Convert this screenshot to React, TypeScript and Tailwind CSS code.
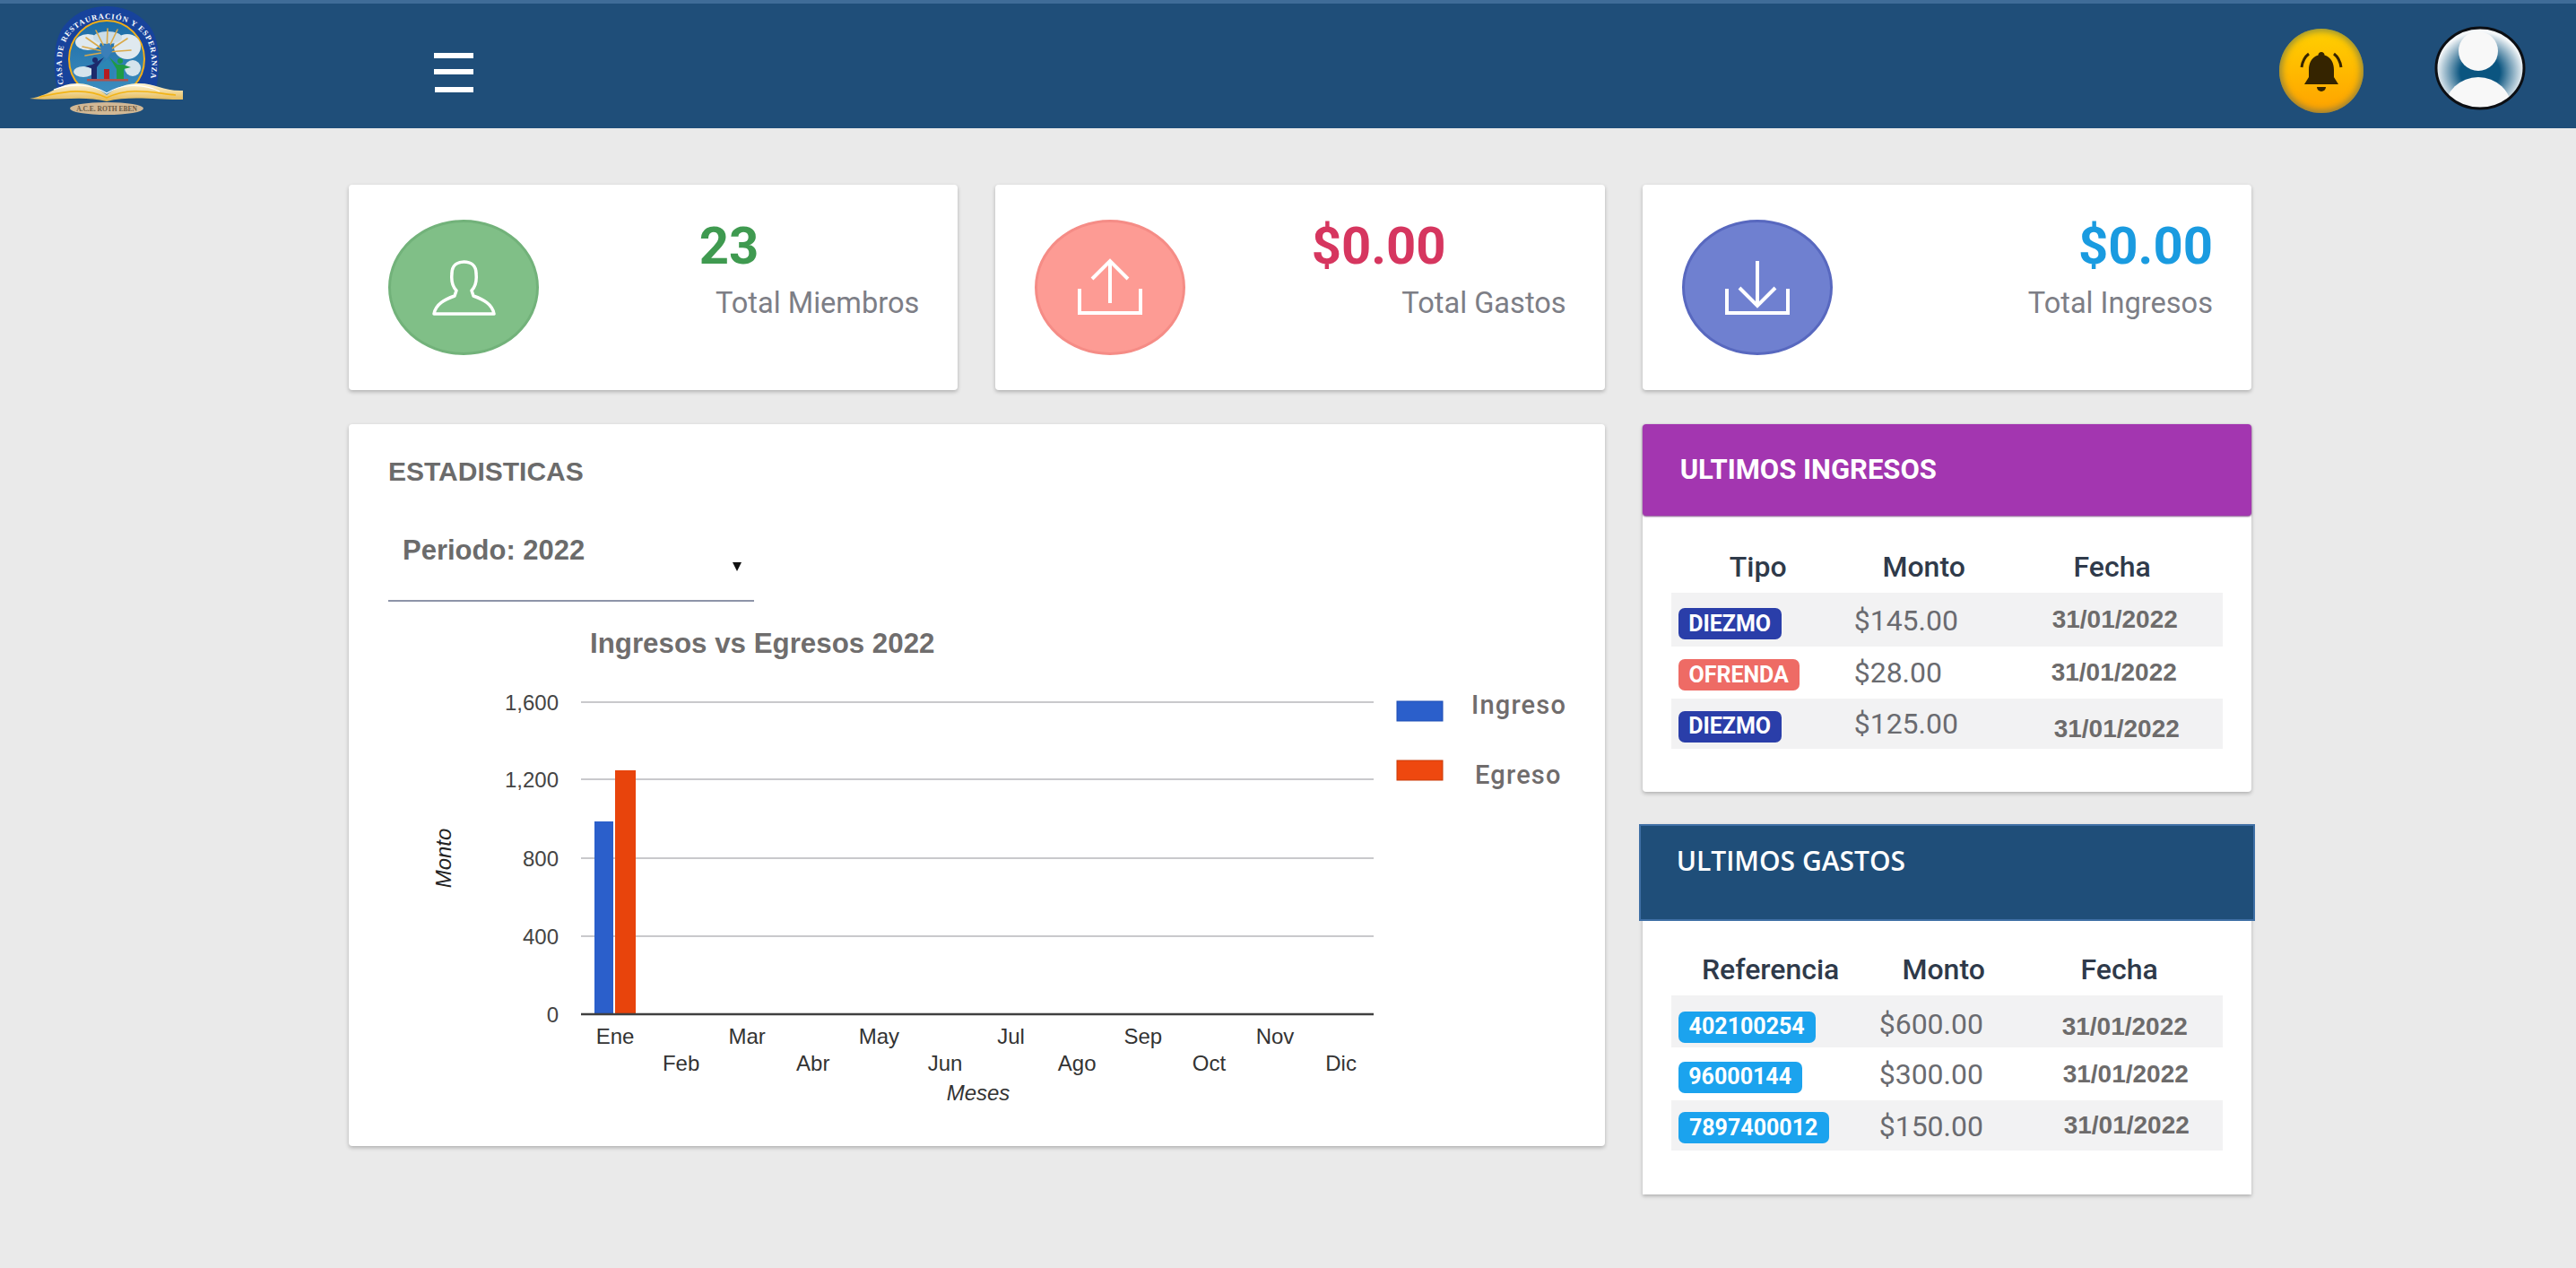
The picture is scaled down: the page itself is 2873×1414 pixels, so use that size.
const roboto = "font-['Roboto',sans-serif]"
const arial = "font-['Liberation_Sans',Arial,sans-serif]"

const ingresos = [
  { badge: 'DIEZMO', badgeClass: 'w-[115px] bg-[#2a3ea9] mt-[9px]', monto: '$145.00', montoClass: 'mt-[2px]', fecha: '31/01/2022', fechaClass: 'ml-[0px]', h: 'h-[60px] bg-[#f2f2f3]' },
  { badge: 'OFRENDA', badgeClass: 'w-[135px] bg-[#ee6b65] mt-[5px]', monto: '$28.00', montoClass: 'mb-[0px]', fecha: '31/01/2022', fechaClass: 'ml-[-1px]', h: 'h-[58px]' },
  { badge: 'DIEZMO', badgeClass: 'w-[115px] bg-[#2a3ea9] mt-[6px]', monto: '$125.00', montoClass: 'mb-[0px]', fecha: '31/01/2022', fechaClass: 'ml-[2px] mt-[12px]', h: 'h-[56px] bg-[#f2f2f3]' },
]

const gastos = [
  { badge: '402100254', badgeClass: 'w-[153px] bg-[#1ba3ee] mt-[12px]', monto: '$600.00', montoClass: 'mt-[6px]', fecha: '31/01/2022', fechaClass: 'mt-[12px]', h: 'h-[58px] bg-[#f2f2f3]' },
  { badge: '96000144', badgeClass: 'w-[138px] bg-[#1ba3ee] mt-[7px]', monto: '$300.00', montoClass: 'mt-[1px]', fecha: '31/01/2022', fechaClass: 'ml-[1px]', h: 'h-[59px]' },
  { badge: '7897400012', badgeClass: 'w-[168px] bg-[#1ba3ee] mt-[5px]', monto: '$150.00', montoClass: 'mt-[2px]', fecha: '31/01/2022', fechaClass: 'ml-[2px]', h: 'h-[56px] bg-[#f2f2f3]' },
]

const meses = ['Ene', 'Feb', 'Mar', 'Abr', 'May', 'Jun', 'Jul', 'Ago', 'Sep', 'Oct', 'Nov', 'Dic']
const ejeY = [
  { label: '1,600', y: 782 },
  { label: '1,200', y: 868 },
  { label: '800', y: 956 },
  { label: '400', y: 1043 },
]

function Logo() {
  return (
    <svg viewBox="33 4 172 135" className="w-[172px] h-[135px] self-start ml-[33px]">
      <defs>
        <linearGradient id="cielo" x1="0" y1="0" x2="0" y2="1">
          <stop offset="0" stopColor="#1c6ba6" />
          <stop offset="1" stopColor="#3f8fc0" />
        </linearGradient>
        <linearGradient id="libro" x1="0" y1="0" x2="0" y2="1">
          <stop offset="0" stopColor="#fff6d8" />
          <stop offset="1" stopColor="#e3b64f" />
        </linearGradient>
        <path id="anillo" d="M71 95 C67 72 68 52 77 40 C87 27 103 21 119 21 C135 21 151 27 161 40 C170 52 171 72 167 95" fill="none" />
      </defs>
      <path d="M64 100 C58 70 60 40 74 26 C86 12 104 7 119 7 C134 7 152 12 164 26 C178 40 180 70 174 100 Z" fill="#17439c" />
      <ellipse cx="119" cy="66" rx="42" ry="43" fill="url(#cielo)" stroke="#f3ae17" strokeWidth="2" />
      <ellipse cx="98" cy="47" rx="14" ry="9" fill="#dfe9ef" />
      <ellipse cx="142" cy="52" rx="15" ry="14" fill="#dfe9ef" />
      <ellipse cx="120" cy="42" rx="16" ry="7" fill="#cbdde8" />
      <ellipse cx="93" cy="80" rx="11" ry="6" fill="#d5e4ec" />
      <ellipse cx="148" cy="76" rx="9" ry="9" fill="#d5e4ec" />
      <g stroke="#d9a94a" strokeWidth="1.6" strokeLinecap="round">
        <path d="M119 58 L107 34" />
        <path d="M119 58 L120 32" />
        <path d="M119 58 L131 33" />
        <path d="M119 58 L142 43" />
        <path d="M119 58 L146 56" />
        <path d="M119 58 L96 42" />
        <path d="M119 58 L92 52" />
        <path d="M119 58 L95 62" />
      </g>
      <path d="M112 52 L122 48 L126 56 L119 66 L113 60 Z" fill="#3b7fb8" />
      <path d="M120 66 L131 76 H127 V88 H110 V76 H107 Z" fill="#2c86b4" />
      <rect x="116" y="77" width="6" height="11" fill="#b51c22" />
      <circle cx="106" cy="67" r="3" fill="#1c2a6b" />
      <path d="M95 74 L103 72 L116 64 L108 75 V88 H102 V76 Z" fill="#1c2a6b" />
      <circle cx="134" cy="68" r="3" fill="#1f9a45" />
      <path d="M122 64 L131 72 H137 L146 75 L138 77 V88 H130 V77 Z" fill="#1f9a45" />
      <rect x="97" y="88" width="46" height="2.5" fill="#b0524e" />
      <text fontSize="8.6" fontWeight="700" fill="#ffffff" fontFamily="'Liberation Serif',serif">
        <textPath href="#anillo" startOffset="1" textLength="200">CASA DE RESTAURACIÓN Y ESPERANZA</textPath>
      </text>
      <ellipse cx="119" cy="121" rx="41" ry="7" fill="#d2b895" />
      <text x="119" y="124" textAnchor="middle" fontSize="7.5" fontWeight="700" fill="#6b5a44" fontFamily="'Liberation Serif',serif">A.C.E. ROTH EBEN</text>
      <path d="M33 110 C58 106 66 92 88 93 C102 94 112 100 119 106 C126 100 136 94 153 93 C172 92 182 102 204 101 V111 C180 112 146 106 119 113 C92 106 60 113 33 110 Z" fill="url(#libro)" />
      <path d="M44 108 C66 104 92 96 119 109 C146 96 172 104 196 106" fill="none" stroke="#f2b417" strokeWidth="1.6" />
      <path d="M60 100 C80 92 104 94 119 104 C134 94 158 92 178 102" fill="none" stroke="#ffffff" strokeWidth="1.2" />
    </svg>
  )
}

function Campana() {
  return (
    <div className="w-[94px] h-[94px] mt-[11px] rounded-full bg-gradient-to-b from-[#ffd000] to-[#ffa200] shadow-[inset_0_0_7px_3px_rgba(70,100,100,0.55)]">
      <svg viewBox="0 0 94 94" className="w-[94px] h-[94px]">
        <path d="M47 26 C49 26 50.5 27.5 50.5 29.5 C58 32 61 38 61 46 V54 L66 62 H28 L33 54 V46 C33 38 36 32 43.5 29.5 C43.5 27.5 45 26 47 26 Z" fill="#352400" />
        <path d="M42 65 H52 A5 5 0 0 1 42 65 Z" fill="#352400" />
        <path d="M25 43 C26 36 29 31 33 28" fill="none" stroke="#352400" strokeWidth="3" />
        <path d="M69 43 C68 36 65 31 61 28" fill="none" stroke="#352400" strokeWidth="3" />
      </svg>
    </div>
  )
}

function Avatar() {
  return (
    <svg viewBox="0 0 102 94" className="w-[102px] h-[94px] ml-[79px] mr-[56px] mt-[5px]">
      <defs>
        <radialGradient id="fondoAvatar" cx="0.5" cy="0.55" r="0.5">
          <stop offset="0.45" stopColor="#0b5580" />
          <stop offset="1" stopColor="#f4f7f9" />
        </radialGradient>
        <clipPath id="recorte">
          <ellipse cx="51" cy="47" rx="49" ry="45" />
        </clipPath>
      </defs>
      <ellipse cx="51" cy="47" rx="49" ry="45" fill="url(#fondoAvatar)" />
      <g clipPath="url(#recorte)">
        <ellipse cx="49" cy="28" rx="22" ry="22" fill="#f8f8f8" />
        <ellipse cx="49" cy="92" rx="37" ry="35" fill="#f8f8f8" />
      </g>
      <ellipse cx="51" cy="47" rx="49" ry="45" fill="none" stroke="#0c0f14" strokeWidth="3" />
    </svg>
  )
}

function IconoMiembro() {
  return (
    <svg viewBox="0 0 71 62" className="w-[71px] h-[62px]" fill="none" stroke="#ffffff" strokeWidth="3.5" strokeLinejoin="round">
      <path d="M2 60 C4 49 14 44 25 40 L27 34 C23 30 21 24 22 15 C22 6 28 2 35.5 2 C43 2 49 6 49 15 C50 24 48 30 44 34 L46 40 C57 44 67 49 69 60 Z" />
    </svg>
  )
}

function IconoSubir() {
  return (
    <svg viewBox="0 0 80 70" className="w-[80px] h-[70px]" fill="none" stroke="#ffffff" strokeWidth="4">
      <path d="M6 36 V63 H74 V36" />
      <path d="M40 5 V52" />
      <path d="M20 25 L40 5 L60 25" />
    </svg>
  )
}

function IconoBajar() {
  return (
    <svg viewBox="0 0 80 70" className="w-[80px] h-[70px]" fill="none" stroke="#ffffff" strokeWidth="4">
      <path d="M6 36 V63 H74 V36" />
      <path d="M40 5 V55" />
      <path d="M20 35 L40 55 L60 35" />
    </svg>
  )
}

function StatCard({ icon, ovalClass, value, valueClass, label }: { icon: React.ReactNode; ovalClass: string; value: string; valueClass: string; label: string }) {
  return (
    <div className="h-[229px] bg-white rounded-[4px] shadow-[0_2px_4px_rgba(0,0,0,0.25)] flex items-center pl-[44px] pr-[43px]">
      <div className={`w-[168px] h-[151px] rounded-[50%] border-[3px] flex items-center justify-center ${ovalClass}`}>{icon}</div>
      <div className={`ml-auto self-start pt-[38px] flex flex-col items-end ${roboto}`}>
        <div className={`h-[60px] leading-[60px] text-[58px] font-bold ${valueClass}`}>{value}</div>
        <div className="mt-[16px] h-[36px] leading-[36px] text-[32.6px] text-[#7d7e86]">{label}</div>
      </div>
    </div>
  )
}

function Grafico() {
  return (
    <svg viewBox="433 690 1340 570" className="w-[1340px] h-[570px] mt-[20px]" fontFamily="'Liberation Sans',Arial,sans-serif">
      <text x="658" y="727" fontSize="31.3" fontWeight="700" fill="#6f6d6d">Ingresos vs Egresos 2022</text>
      {ejeY.map((t) => (
        <g key={t.label}>
          <line x1="648" x2="1532" y1={t.y} y2={t.y} stroke="#c9c9cc" strokeWidth="2" />
          <text x="623" y={t.y + 9} textAnchor="end" fontSize="24" fill="#444444">{t.label}</text>
        </g>
      ))}
      <text x="623" y="1139" textAnchor="end" fontSize="24" fill="#444444">0</text>
      <rect x="663" y="915" width="21" height="215" fill="#2b5fcb" />
      <rect x="686" y="858" width="23" height="272" fill="#e8440c" />
      <line x1="648" x2="1532" y1="1130" y2="1130" stroke="#3f3f3f" strokeWidth="2.5" />
      {meses.map((m, i) => (
        <text key={m} x={686 + i * 73.6} y={i % 2 === 0 ? 1163 : 1193} textAnchor="middle" fontSize="24" fill="#333333">{m}</text>
      ))}
      <text x="1091" y="1226" textAnchor="middle" fontSize="24" fontStyle="italic" fill="#333333">Meses</text>
      <text transform="translate(503 956) rotate(-90)" textAnchor="middle" fontSize="24" fontStyle="italic" fill="#222222">Monto</text>
      <rect x="1558" y="781" width="51" height="22" fill="#2b5fcb" stroke="#1f4fb5" strokeWidth="1" />
      <rect x="1558" y="847" width="51" height="22" fill="#ee480f" stroke="#c93c0a" strokeWidth="1" />
      <text x="1641" y="795" fontSize="29" fontWeight="500" letterSpacing="1.2" fill="#706c6c" fontFamily="Roboto,sans-serif">Ingreso</text>
      <text x="1645" y="873" fontSize="29" fontWeight="500" letterSpacing="1.2" fill="#706c6c" fontFamily="Roboto,sans-serif">Egreso</text>
    </svg>
  )
}

type Fila = (typeof ingresos)[number]

function Filas({ filas, col1, col2 }: { filas: Fila[]; col1: string; col2: string }) {
  return (
    <div className="mx-[32px]">
      {filas.map((f, i) => (
        <div key={i} className={`flex items-center ${f.h}`}>
          <div className={`shrink-0 ${col1}`}>
            <span className={`ml-[8px] h-[35px] rounded-[7px] flex items-center justify-center text-white text-[25px] font-bold ${roboto} ${f.badgeClass}`}>{f.badge}</span>
          </div>
          <div className={`shrink-0 text-[32px] leading-[40px] text-[#6a6b70] ${roboto} ${col2} ${f.montoClass}`}>{f.monto}</div>
          <div className={`text-[28px] leading-[34px] font-bold text-[#6d6b6b] ${arial} ${f.fechaClass}`}>{f.fecha}</div>
        </div>
      ))}
    </div>
  )
}

export default function App() {
  return (
    <div className="min-h-[1414px] bg-[#eaeaea]">
      <header className="h-[143px] bg-[#1f4e79] border-t-[4px] border-[#3f6c98] flex items-center">
        <Logo />
        <div className="self-start mt-[55px] ml-[279px] w-[44px]">
          <div className="h-[6px] bg-white" />
          <div className="h-[6px] bg-white mt-[12px]" />
          <div className="h-[6px] bg-white mt-[14px] ml-[1px]" />
        </div>
        <div className="ml-auto flex items-center">
          <Campana />
          <Avatar />
        </div>
      </header>

      <main className="w-[2122px] ml-[389px] pt-[63px]">
        <div className="grid grid-cols-3 gap-x-[42px]">
          <StatCard icon={<IconoMiembro />} ovalClass="bg-[#80bf87] border-[#72b27a]" value="23" valueClass="mr-[179px] text-[#3f9a50]" label="Total Miembros" />
          <StatCard icon={<IconoSubir />} ovalClass="bg-[#fd9b94] border-[#f58c86]" value="$0.00" valueClass="mr-[134px] text-[#d6365f]" label="Total Gastos" />
          <StatCard icon={<IconoBajar />} ovalClass="bg-[#6f80d0] border-[#5868bf]" value="$0.00" valueClass="text-[#1a9be0]" label="Total Ingresos" />
        </div>

        <div className="grid grid-cols-[1400.67px_679.33px] gap-x-[42px] mt-[38px] items-start">
          <section className="h-[805px] bg-white rounded-[4px] shadow-[0_2px_4px_rgba(0,0,0,0.25)] pl-[44px]">
            <h2 className={`pt-[36px] text-[30px] leading-[34px] font-bold text-[#6b6b6b] ${arial}`}>ESTADISTICAS</h2>
            <div className={`relative w-[408px] h-[110px] mt-[18px] border-b-2 border-[#8d94a8] pl-[16px] pt-[35px] text-[31px] leading-[36px] font-bold text-[#6b6b6b] ${arial}`}>
              Periodo: 2022
              <span className="absolute left-[384px] top-[66px] w-0 h-0 border-x-[5px] border-t-[10px] border-x-transparent border-t-[#111111]" />
            </div>
            <Grafico />
          </section>

          <div>
            <section className="bg-white shadow-[0_2px_4px_rgba(0,0,0,0.25)] rounded-[4px] pb-[48px]">
              <div className={`h-[102px] bg-[#a336b0] rounded-[4px] shadow-[0_1px_2px_rgba(90,20,100,0.8)] pl-[42px] pt-[33px] text-[31px] leading-[36px] font-bold text-white ${roboto}`}>ULTIMOS INGRESOS</div>
              <div className={`flex h-[86px] pt-[28px] items-center text-[32px] font-medium text-[#2f3a4a] mx-[32px] ${roboto}`}>
                <div className="w-[194px] text-center">Tipo</div>
                <div className="w-[176px] text-center">Monto</div>
                <div className="w-[244px] text-center">Fecha</div>
              </div>
              <Filas filas={ingresos} col1="w-[204px]" col2="w-[221px]" />
            </section>

            <section className="bg-white shadow-[0_2px_4px_rgba(0,0,0,0.25)] mt-[36px] pb-[49px]">
              <div className="-mx-[4px] h-[108px] bg-[#1f4e79] border-2 border-[#3f6fa5] pl-[40px] pt-[20px] text-[30px] leading-[38px] font-semibold text-white font-['Open_Sans',sans-serif]">ULTIMOS GASTOS</div>
              <div className={`flex h-[83px] pt-[25px] items-center text-[32px] font-medium text-[#2f3a4a] mx-[32px] ${roboto}`}>
                <div className="w-[222px] text-center">Referencia</div>
                <div className="w-[164px] text-center">Monto</div>
                <div className="w-[228px] text-center">Fecha</div>
              </div>
              <Filas filas={gastos} col1="w-[232px]" col2="w-[204px]" />
            </section>
          </div>
        </div>
      </main>
    </div>
  )
}
